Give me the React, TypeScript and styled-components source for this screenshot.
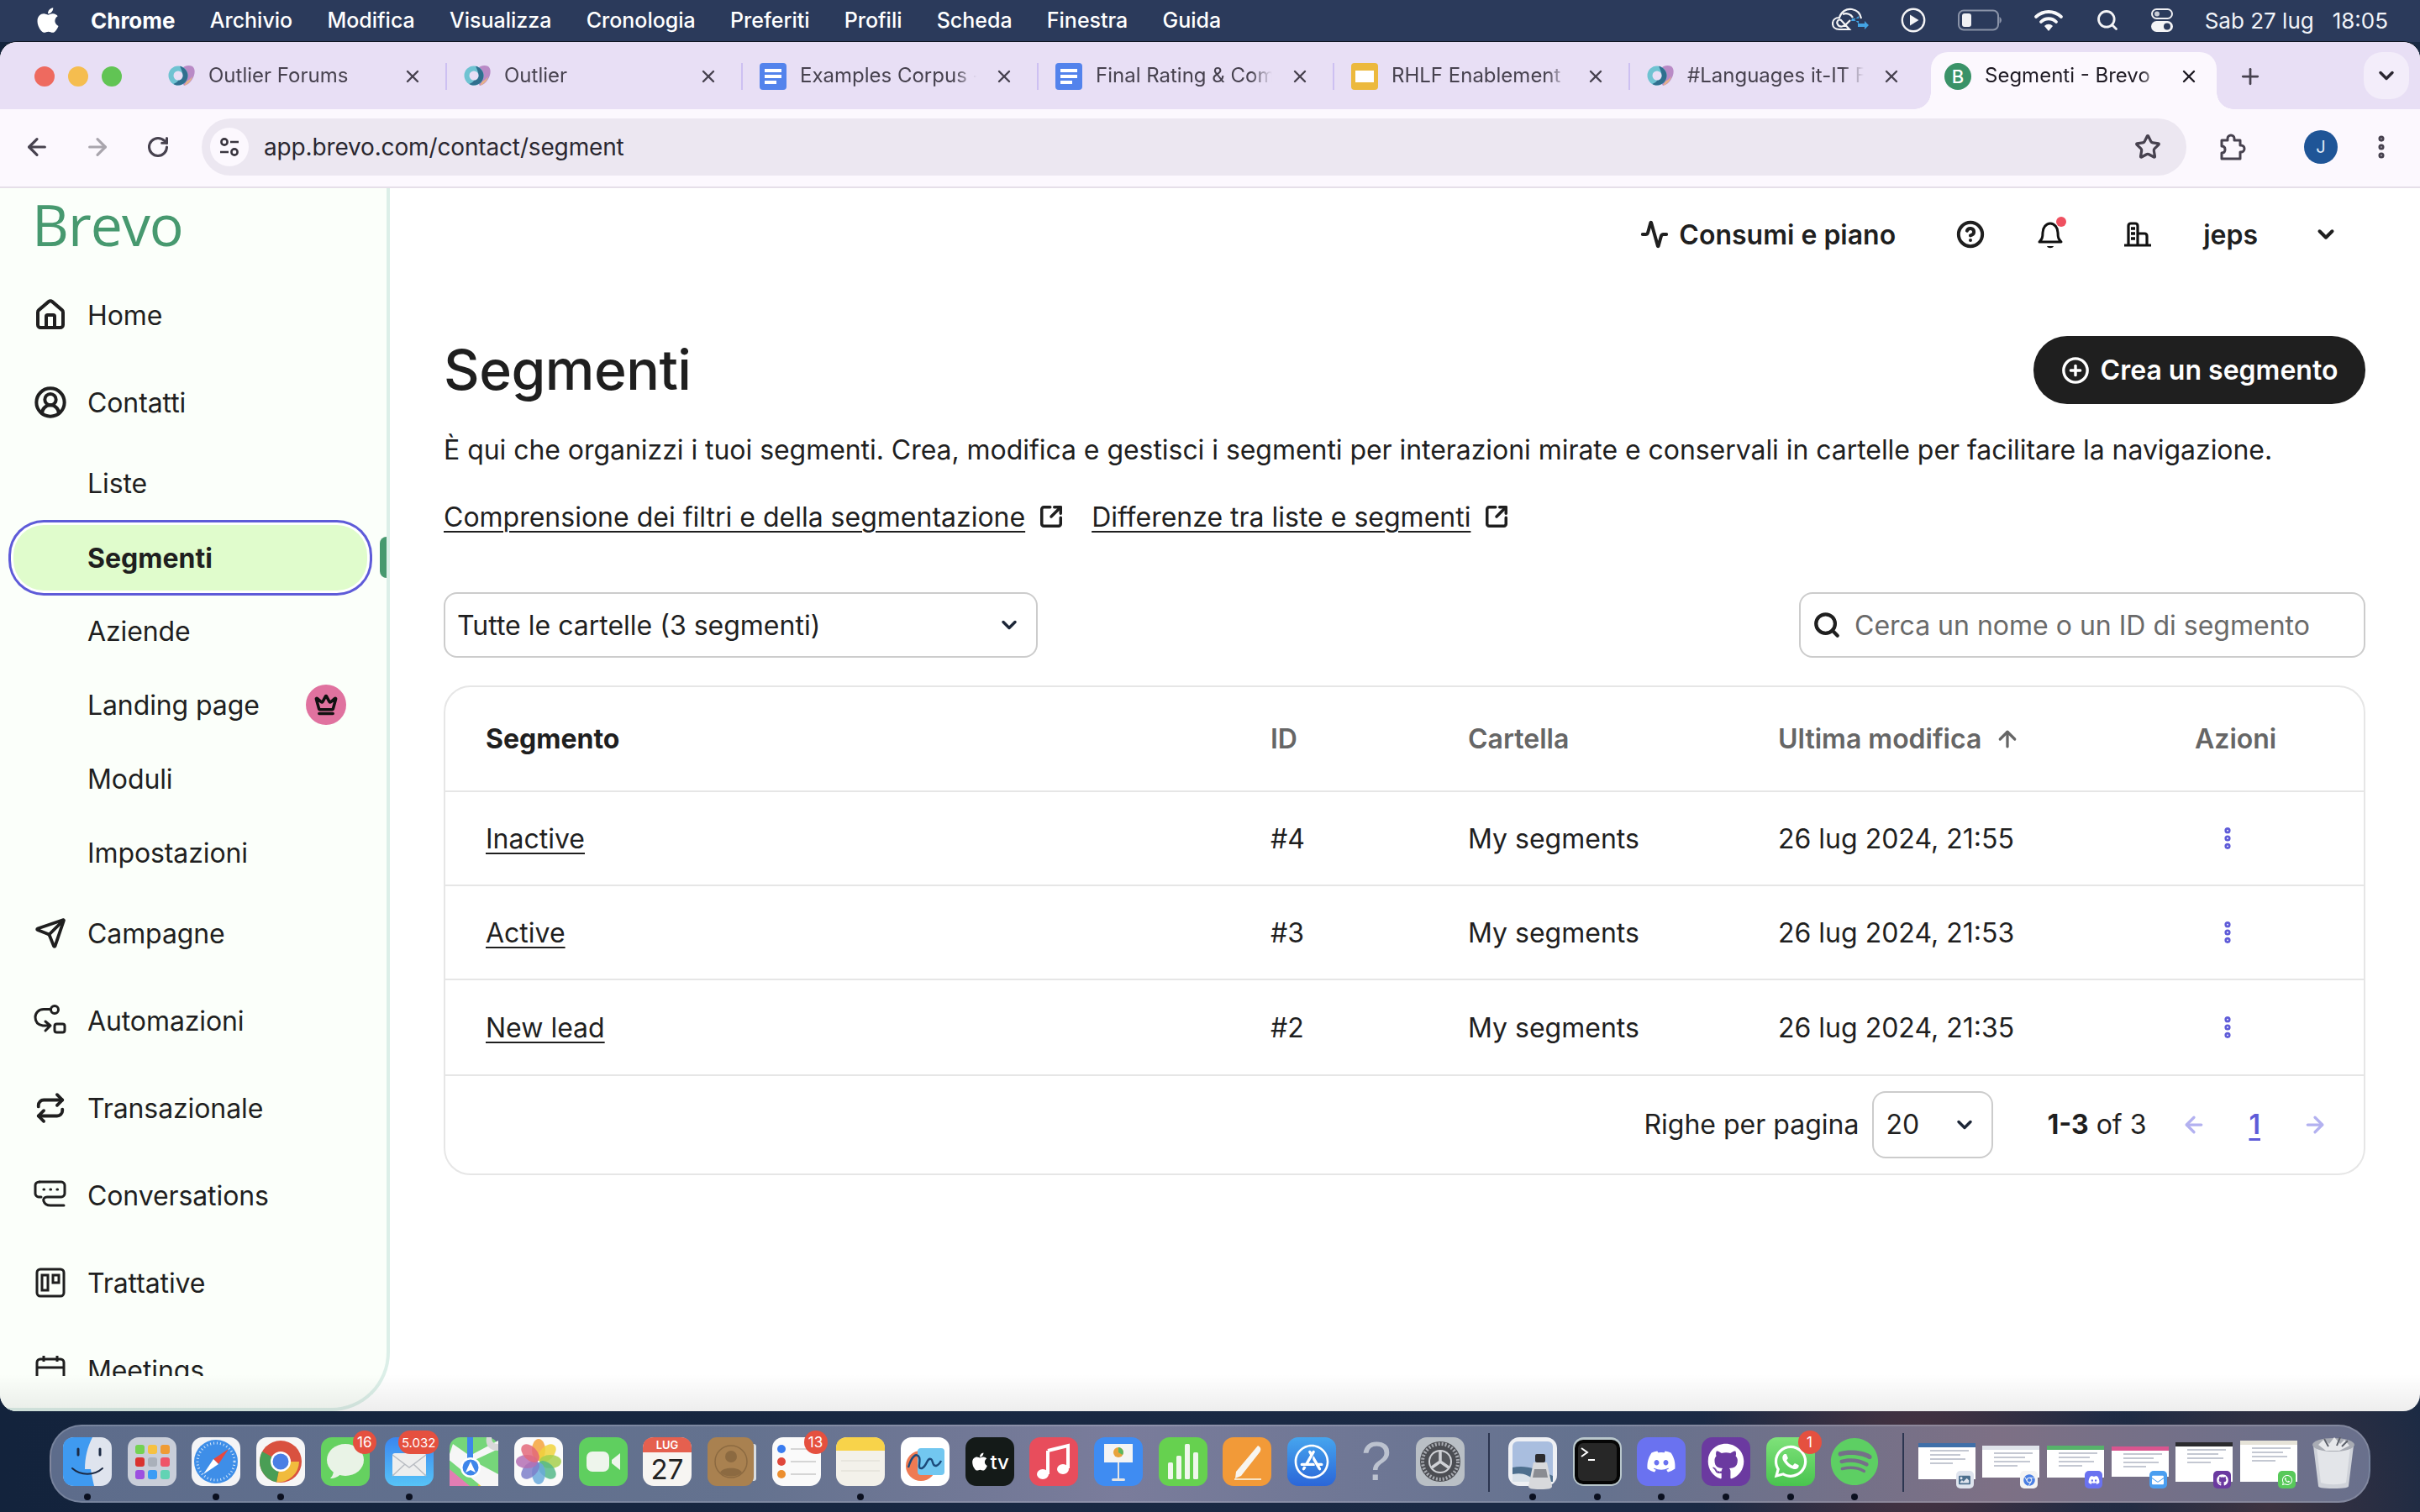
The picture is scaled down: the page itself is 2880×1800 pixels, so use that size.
import styled, { createGlobalStyle } from "styled-components";
import type { ReactNode } from "react";
import {
  Activity, ArrowLeft, ArrowRight, ArrowUp, ChevronDown, CirclePlus,
  CircleHelp, CircleUserRound, EllipsisVertical, House, Plus, Repeat, RotateCw, Search, Send,
  SquareArrowOutUpRight, Star, X, Crown,
} from "lucide-react";
import {
  FaApple, FaAppStore, FaChrome, FaDiscord, FaEnvelope, FaGithub, FaImage, FaSpotify, FaWhatsapp,
} from "react-icons/fa";

const GlobalStyle = createGlobalStyle`
  html, body { margin: 0; padding: 0; }
  body { font-family: "Inter", "Liberation Sans", sans-serif; color: #1f1f1f; }
  * { box-sizing: border-box; }
`;

const Screen = styled.div`
  width: 2880px;
  height: 1800px;
  display: flex;
  flex-direction: column;
  overflow: hidden;
  background:
    radial-gradient(circle at 2280px 1740px, #4a3340 0, rgba(74, 51, 64, 0) 260px),
    radial-gradient(circle at 2700px 1790px, #3e3340 0, rgba(62, 51, 64, 0) 220px),
    linear-gradient(90deg, #13233c 0%, #1b2a45 60%, #1a2a44 100%);
`;

/* mac menu bar */
const MenuBar = styled.div`
  height: 50px;
  flex: none;
  display: flex;
  align-items: center;
  padding: 0 38px 2px 40px;
  background: #2b3a5b;
  color: #fff;
  font-size: 25px;
  font-weight: 500;
`;

const AppleBox = styled.span`
  display: flex;
  width: 68px;
  font-size: 34px;
`;

const MenuItem = styled.span<{ $bold?: boolean }>`
  margin-right: 41.2px;
  font-size: ${(p) => (p.$bold ? 26 : 25)}px;
  font-weight: ${(p) => (p.$bold ? 700 : 500)};
`;

const StatusArea = styled.div`
  margin-left: auto;
  display: flex;
  align-items: center;
  gap: 38px;
`;

const StatusClock = styled.span`
  font-size: 26px;
  font-weight: 400;
  white-space: pre;
  color: #f1f3f8;
`;

/* browser window */
const BrowserWindow = styled.div`
  height: 1630px;
  flex: none;
  display: flex;
  flex-direction: column;
  border-radius: 20px;
  overflow: hidden;
  background: #fff;
  position: relative;
  box-shadow: 0 -1px 0 #0e1420;

  &::after {
    content: "";
    position: absolute;
    left: 0;
    right: 0;
    bottom: 0;
    height: 44px;
    background: linear-gradient(180deg, rgba(0, 0, 0, 0), rgba(0, 0, 0, 0.07));
    pointer-events: none;
  }
`;

const TabStrip = styled.div`
  height: 80px;
  flex: none;
  display: flex;
  align-items: flex-end;
  background: #e8dff5;
`;

const TrafficLights = styled.div`
  width: 178px;
  height: 68px;
  flex: none;
  display: flex;
  gap: 16px;
  padding: 17px 0 0 41px;
`;

const Light = styled.span<{ $color: string }>`
  width: 24px;
  height: 24px;
  border-radius: 50%;
  background: ${(p) => p.$color};
`;

const Tab = styled.div<{ $active?: boolean; $divider?: boolean }>`
  width: 352px;
  height: 68px;
  flex: none;
  display: flex;
  align-items: center;
  padding: 0 0 10px ${(p) => (p.$active ? 24 : 22)}px;
  font-size: 24px;
  color: ${(p) => (p.$active ? "#1f1b24" : "#47424f")};
  position: relative;

  &::before {
    content: "";
    display: ${(p) => (p.$divider ? "block" : "none")};
    position: absolute;
    left: 0;
    top: 13px;
    width: 2px;
    height: 32px;
    background: #cdc0f2;
  }
`;

const ActiveShape = styled.div`
  position: absolute;
  inset: 0 4px 0 8px;
  background: #fcf8fe;
  border-radius: 20px 20px 0 0;

  &::before,
  &::after {
    content: "";
    position: absolute;
    bottom: 0;
    width: 20px;
    height: 20px;
  }
  &::before {
    left: -20px;
    background: radial-gradient(circle at 0 0, transparent 19.5px, #fcf8fe 20px);
  }
  &::after {
    right: -20px;
    background: radial-gradient(circle at 100% 0, transparent 19.5px, #fcf8fe 20px);
  }
`;

const Favicon = styled.span`
  width: 32px;
  height: 32px;
  flex: none;
  display: flex;
  position: relative;
`;

const BrevoFavicon = styled(Favicon)`
  border-radius: 50%;
  background: #3a9268;
  color: #fff;
  font-size: 22px;
  font-weight: 500;
  align-items: center;
  justify-content: center;
`;

const TabTitle = styled.span`
  width: 210px;
  margin: -3px 0 0 16px;
  padding-bottom: 1px;
  white-space: nowrap;
  overflow: hidden;
  position: relative;
  -webkit-mask-image: linear-gradient(90deg, #000 88%, transparent 100%);
  mask-image: linear-gradient(90deg, #000 88%, transparent 100%);
`;

const TabClose = styled.span`
  margin-left: 21px;
  display: flex;
  position: relative;
`;

const NewTab = styled.div`
  width: 72px;
  height: 68px;
  flex: none;
  display: flex;
  align-items: center;
  justify-content: center;
  padding-bottom: 10px;
  color: #47424f;
`;

const TabSearch = styled.div`
  width: 54px;
  height: 56px;
  margin: 0 13px 12px auto;
  border-radius: 22px;
  background: #f3edfa;
  display: flex;
  align-items: center;
  justify-content: center;
  color: #2b2731;
`;

const Toolbar = styled.div`
  height: 94px;
  flex: none;
  display: flex;
  align-items: center;
  padding: 0 8px 2px;
  background: #fcf8fe;
  border-bottom: 2px solid #e6dfe9;
  color: #47424f;
`;

const ToolButton = styled.span<{ $muted?: boolean; $w?: number }>`
  width: ${(p) => p.$w ?? 72}px;
  flex: none;
  display: flex;
  justify-content: center;
  color: ${(p) => (p.$muted ? "#a9a5ad" : "#47424f")};
`;

const UrlBar = styled.div`
  width: 2362px;
  height: 68px;
  margin: 0 18px 0 16px;
  flex: none;
  display: flex;
  align-items: center;
  padding: 0 30px 0 10px;
  border-radius: 34px;
  background: #ece7f1;
`;

const SiteInfo = styled.span`
  width: 46px;
  height: 46px;
  border-radius: 50%;
  background: #fcf8fe;
  display: flex;
  align-items: center;
  justify-content: center;
`;

const UrlText = styled.span`
  margin-left: 18px;
  font-size: 28px;
  letter-spacing: -0.15px;
  color: #2a2730;
`;

const StarBox = styled.span`
  margin-left: auto;
  display: flex;
`;

const ToolDivider = styled.span`
  width: 2px;
  height: 34px;
  background: #e3dbef;
  margin: 0 32px 0 18px;
`;

const Avatar = styled.span`
  width: 40px;
  height: 40px;
  flex: none;
  border-radius: 50%;
  background: #1f5597;
  color: #dfe9f6;
  font-size: 20px;
  display: flex;
  align-items: center;
  justify-content: center;
`;

/* page */
const Body = styled.div`
  flex: 1;
  min-height: 0;
  display: flex;
`;

const Sidebar = styled.aside`
  width: 464px;
  flex: none;
  display: flex;
  flex-direction: column;
  background: #fbfffa;
  border-right: 4px solid #dcefe8;
  border-bottom: 4px solid #dcefe8;
  border-bottom-right-radius: 70px;
`;

const LogoRow = styled.div`
  height: 99px;
  flex: none;
  padding: 20px 0 0 38px;
  font-size: 68px;
  line-height: 46px;
  letter-spacing: -1px;
  font-family: "Open Sans", "Inter", sans-serif;
  font-weight: 500;
  color: #47996f;
`;

const NavList = styled.nav`
  flex: 1;
  min-height: 0;
  margin-bottom: 38px;
  overflow: hidden;
`;

const NavItem = styled.div<{ $sub?: boolean }>`
  height: ${(p) => (p.$sub ? 88 : 104)}px;
  display: flex;
  align-items: center;
  padding-left: ${(p) => (p.$sub ? 104 : 40)}px;
  padding-right: 48px;
  gap: 24px;
  font-size: 32px;
  letter-spacing: -0.1px;
  color: #1f1f1f;
  position: relative;
`;

const NavIcon = styled.span`
  width: 40px;
  height: 40px;
  flex: none;
  display: flex;
  align-items: center;
  justify-content: center;
`;

const ActiveWrap = styled.div`
  height: 88px;
  padding: 6px 0 0 16px;
  position: relative;
`;

const ActivePill = styled.div`
  width: 421px;
  height: 78px;
  display: flex;
  align-items: center;
  padding-left: 88px;
  border-radius: 36px;
  background: #e0fccc;
  box-shadow: 0 0 0 3px #fff, 0 0 0 6px #5e5bd8;
  font-size: 32px;
  font-weight: 700;
`;

const ActiveMark = styled.span`
  position: absolute;
  left: 452px;
  top: 20px;
  width: 8px;
  height: 49px;
  border-radius: 8px 0 0 8px;
  background: #47996f;
`;

const CrownBadge = styled.span`
  margin-left: auto;
  width: 48px;
  height: 48px;
  border-radius: 50%;
  background: #e0729f;
  display: flex;
  align-items: center;
  justify-content: center;
`;

const Main = styled.main`
  flex: 1;
  min-width: 0;
  padding: 0 65px 0 64px;
`;

const TopBar = styled.div`
  height: 110px;
  display: flex;
  align-items: center;
  font-size: 32px;
  font-weight: 600;
  padding-right: 32px;
  justify-content: flex-end;
`;

const TopItem = styled.span<{ $gap?: number }>`
  display: flex;
  align-items: center;
  gap: 12px;
  margin-left: ${(p) => p.$gap ?? 0}px;
`;

const BellWrap = styled.span`
  display: flex;
  position: relative;
`;

const BellDot = styled.span`
  position: absolute;
  top: -3px;
  right: -3px;
  width: 12px;
  height: 12px;
  border-radius: 50%;
  background: #ef5060;
`;

const TitleRow = styled.div`
  margin-top: 66px;
  height: 81px;
  display: flex;
  align-items: center;
  justify-content: space-between;
`;

const Title = styled.h1`
  margin: -2px 0 0;
  font-size: 66px;
  font-weight: 500;
  letter-spacing: -0.5px;
`;

const CreateButton = styled.button`
  height: 81px;
  width: 395px;
  border: none;
  border-radius: 40px;
  background: #1f1f1f;
  color: #fff;
  font: 600 32px "Inter", sans-serif;
  display: flex;
  align-items: center;
  justify-content: center;
  gap: 13px;
`;

const Description = styled.p`
  margin: 33px 0 0;
  font-size: 32px;
  line-height: 44px;
  letter-spacing: -0.05px;
  white-space: nowrap;
`;

const LinkRow = styled.div`
  margin-top: 35px;
  height: 44px;
  display: flex;
  align-items: center;
  font-size: 32px;
`;

const TextLink = styled.a`
  color: #1f1f1f;
  text-decoration: underline;
  text-underline-offset: 5px;
  text-decoration-thickness: 2px;
`;

const LinkIcon = styled.span`
  display: flex;
  margin: 0 33px 0 16px;
`;

const FilterRow = styled.div`
  margin-top: 68px;
  display: flex;
  justify-content: space-between;
`;

const SelectBox = styled.div<{ $w: number; $h: number }>`
  width: ${(p) => p.$w}px;
  height: ${(p) => p.$h}px;
  display: flex;
  align-items: center;
  justify-content: space-between;
  padding: 0 18px 0 14px;
  border: 2px solid #cccccc;
  border-radius: 16px;
  font-size: 32px;
`;

const SearchBox = styled.div`
  width: 674px;
  height: 78px;
  display: flex;
  align-items: center;
  gap: 16px;
  padding: 0 14px;
  border: 2px solid #cccccc;
  border-radius: 16px;
  font-size: 32px;
  color: #6a6a6a;
`;

const Table = styled.div`
  margin-top: 33px;
  height: 583px;
  border: 2px solid #e6e6e6;
  border-radius: 32px;
`;

const Row = styled.div<{ $head?: boolean; $last?: boolean }>`
  height: ${(p) => (p.$head ? 125 : p.$last ? 114 : 112)}px;
  display: grid;
  grid-template-columns: 934px 235px 369px 496px 1fr;
  align-items: center;
  padding-left: 48px;
  border-bottom: 2px solid #e6e6e6;
  font-size: 32px;
  font-weight: ${(p) => (p.$head ? 600 : 400)};
  color: ${(p) => (p.$head ? "#666666" : "#1f1f1f")};
`;

const HeadStrong = styled.span`
  color: #1f1f1f;
  font-weight: 700;
`;

const SortHead = styled.span`
  display: flex;
  align-items: center;
  gap: 16px;
`;

const DotsCell = styled.span`
  display: flex;
  margin-left: 23px;
  color: #5e5bd8;
`;

const Footer = styled.div`
  height: 115px;
  display: flex;
  align-items: center;
  justify-content: flex-end;
  font-size: 32px;
  padding-right: 43px;
`;

const PageBold = styled.b`
  font-weight: 700;
`;

const RangeText = styled.span`
  margin: 0 42px 0 64px;
`;

const PagerNumber = styled.span`
  margin: 0 50px;
  color: #5e5bd8;
  font-weight: 600;
  text-decoration: underline;
  text-underline-offset: 5px;
  text-decoration-thickness: 3px;
`;

const RowsSelect = styled(SelectBox)`
  margin-left: 16px;
`;

/* dock */
const DockZone = styled.div`
  flex: 1;
  padding: 16px 0 0 59px;
`;

const Dock = styled.div`
  width: 2762px;
  height: 93px;
  display: flex;
  gap: 18.7px;
  padding: 13px 0 0 14px;
  border: 2px solid rgba(255, 255, 255, 0.16);
  border-radius: 38px;
  background: linear-gradient(90deg, #5d6c8b 0%, #64728f 30%, #7a7c9b 46%, #64728f 66%, #7d7085 84%, #69708c 100%);
`;

const DockApp = styled.div`
  width: 58px;
  height: 58px;
  flex: none;
  position: relative;
`;

const RunDot = styled.span`
  position: absolute;
  left: 25px;
  top: 67px;
  width: 8px;
  height: 8px;
  border-radius: 50%;
  background: #0b1020;
`;

const Badge = styled.span<{ $wide?: boolean }>`
  position: absolute;
  top: -8px;
  right: ${(p) => (p.$wide ? -6 : -8)}px;
  min-width: 28px;
  height: 28px;
  padding: 0 4px;
  border-radius: 14px;
  background: #e5503f;
  color: #fff;
  font-size: ${(p) => (p.$wide ? 15 : 17)}px;
  display: flex;
  align-items: center;
  justify-content: center;
`;

const Tile = styled.div<{ $bg: string; $color?: string; $size?: number }>`
  width: 58px;
  height: 58px;
  border-radius: 13px;
  background: ${(p) => p.$bg};
  color: ${(p) => p.$color ?? "#fff"};
  font-size: ${(p) => p.$size ?? 36}px;
  display: flex;
  align-items: center;
  justify-content: center;
  overflow: hidden;
`;

const TvText = styled.span`
  font-size: 24px;
  font-weight: 500;
  display: flex;
  align-items: center;
`;

const QuestionMark = styled.span`
  width: 58px;
  height: 58px;
  display: flex;
  align-items: center;
  justify-content: center;
  font-family: "Liberation Sans", sans-serif;
  font-size: 64px;
  font-weight: 400;
  color: #bcc2cf;
`;

const DockDivider = styled.span`
  width: 2px;
  height: 70px;
  flex: none;
  margin: -5px 3px 0 9px;
  background: #2b3550;
`;

const ThumbApp = styled.div`
  width: 58px;
  height: 58px;
  flex: none;
  position: relative;
`;

const ThumbWindow = styled.div<{ $top: number; $h: number; $bar: string }>`
  width: 68px;
  height: ${(p) => p.$h}px;
  margin: ${(p) => p.$top}px 0 0 -5px;
  background: linear-gradient(${(p) => p.$bar} 0 5px, #fff 5px);
  overflow: hidden;
  display: flex;
  flex-direction: column;
  gap: 3px;
  padding: 8px 8px 0 14px;
`;

const ThumbLine = styled.span<{ $w: number }>`
  height: 2px;
  flex: none;
  width: ${(p) => p.$w}%;
  background: #c4c8d2;
`;

const ThumbBadge = styled.span<{ $bg: string }>`
  position: absolute;
  right: -3px;
  top: 40px;
  width: 21px;
  height: 21px;
  border-radius: 5px;
  background: ${(p) => p.$bg};
  color: #fff;
  font-size: 14px;
  display: flex;
  align-items: center;
  justify-content: center;
`;

/* drawings */
const OutlierIcon = () => (
  <svg width="32" height="32" viewBox="0 0 32 32">
    <path d="M16 7c3-4 9-5 13-3 4 3 3 10 0 15-2 4-6 7-10 8-4-6-5-14-3-20z" fill="#b98ac6" />
    <path d="M22 22c2-1 5-3 7-6-1 5-5 9-10 11z" fill="#e8b487" />
    <circle cx="12" cy="15" r="11.500" fill="#6fc3d2" />
    <path d="M14 3.700c5 1 9.500 5.800 9.500 11.300 0 6.400-5.100 11.500-11.500 11.500-2 0-4-.5-5.600-1.500C9 24 12 22 12 20.500c3.500 0 5.500-2.500 5.500-5.500 0-4-2-8-3.500-11.300z" fill="#2f6f8e" />
    <circle cx="12" cy="15" r="5.500" fill="#e8dff5" />
  </svg>
);

const DocIcon = ({ color }: { color: string }) => (
  <svg width="32" height="32" viewBox="0 0 32 32">
    <rect width="32" height="32" rx="4" fill={color} />
    <rect x="6" y="7" width="20" height="4" fill="#fff" />
    <rect x="6" y="14" width="20" height="4" fill="#fff" />
    <rect x="6" y="21" width="14" height="4" fill="#fff" />
  </svg>
);

const SlidesIcon = () => (
  <svg width="32" height="32" viewBox="0 0 32 32">
    <rect width="32" height="32" rx="4" fill="#ecb93d" />
    <rect x="5" y="9" width="22" height="14" fill="#fff" />
  </svg>
);

const TuneIcon = () => (
  <svg width="28" height="28" viewBox="0 0 28 28" fill="none" stroke="#3a3640" strokeWidth="2.6">
    <circle cx="8" cy="8" r="3.6" />
    <path d="M15 8h10M3 20h10" />
    <circle cx="20" cy="20" r="3.6" />
  </svg>
);

const ExtensionIcon = () => (
  <svg width="36" height="36" viewBox="0 0 36 36" fill="none" stroke="#47424f" strokeWidth="3" strokeLinejoin="round">
    <path d="M6 10h7V8a4 4 0 0 1 8 0v2h7v6h1a4 4 0 0 1 0 8h-1v8H6v-7c3 0 4-2 4-4s-1-4-4-4z" />
  </svg>
);

const CloudSyncIcon = () => (
  <svg width="44" height="32" viewBox="0 0 44 32" fill="none" stroke="#f4f4f6" strokeWidth="2.200">
    <path d="M9 27C4 27 1 24 1 20c0-4 3-7 8-7 2-7 8-11 15-10 6 1 10 5 11 11" />
    <path d="M13 9c5-2 10 0 12 4M9 27h12L11 16c-3-2-6 2-4 5 2 4 8 3 11-1l4-4" />
    <path d="M32 11v3h-8l-1 3 9 0v3l-5-4.500zM31 20h8v-3l5 5-5 5v-3h-8z" fill="#44a4e4" stroke="none" />
  </svg>
);

const PlayIcon = () => (
  <svg width="30" height="30" viewBox="0 0 30 30">
    <circle cx="15" cy="15" r="13.200" fill="none" stroke="#f4f4f6" strokeWidth="2.400" />
    <path d="M11 8.500 21.500 15 11 21.500z" fill="#f4f4f6" />
  </svg>
);

const BatteryIcon = () => (
  <svg width="52" height="26" viewBox="0 0 52 26">
    <rect x="1" y="1.500" width="47" height="23" rx="6" fill="none" stroke="#8a93a8" strokeWidth="2" />
    <rect x="5" y="5" width="11" height="16" rx="3" fill="#f1f1f4" />
    <path d="M49.500 9c1.500 1 2.500 2.500 2.500 4s-1 3-2.500 4z" fill="#8a93a8" />
  </svg>
);

const WifiIcon = () => (
  <svg width="36" height="28" viewBox="0 0 36 28" fill="none" stroke="#f8f8fa" strokeWidth="3.800" strokeLinecap="round">
    <path d="M3 10c9-8 21-8 30 0" />
    <path d="M9 16c5-5 13-5 18 0" />
    <path d="M13 21c3-3 7-3 10 0l-5 6z" fill="#f8f8fa" stroke="none" />
  </svg>
);

const ControlIcon = () => (
  <svg width="26" height="28" viewBox="0 0 26 28">
    <rect x="1" y="1" width="24" height="11" rx="5.500" fill="none" stroke="#eeeef2" strokeWidth="2" />
    <circle cx="7" cy="6.500" r="3" fill="#c9ccd6" />
    <rect y="15" width="26" height="13" rx="6.500" fill="#f4f4f6" />
    <circle cx="19" cy="21.500" r="4" fill="#2b3a5b" />
  </svg>
);

const BellIcon = () => (
  <svg width="32" height="36" viewBox="0 0 32 36" fill="none" stroke="#111" strokeWidth="3" strokeLinejoin="round">
    <path d="M3 27c3-3 4-5 4-11 0-6 4-11 9-11s9 5 9 11c0 6 1 8 4 11z" />
    <path d="M12 32h8c-1 3-7 3-8 0z" fill="#111" stroke="none" />
  </svg>
);

const BuildingIcon = () => (
  <svg width="32" height="30" viewBox="0 0 32 30" fill="none" stroke="#111" strokeWidth="3.200">
    <path d="M5 28V5c0-2 1-3 3-3h5c2 0 3 1 3 3v23M16 14h8c2 0 3 1 3 3v11M0 28h32" />
    <path d="M8 8h5M8 14h5M8 20h5" strokeWidth="3.400" />
  </svg>
);

const AutomationIcon = () => (
  <svg width="40" height="40" viewBox="0 0 40 40" fill="none" stroke="#1f1f1f" strokeWidth="3" strokeLinecap="round" strokeLinejoin="round">
    <circle cx="25" cy="7" r="4.500" />
    <rect x="25" y="24" width="12" height="10" rx="2.500" />
    <path d="M19 6.500h-7C6 6.500 2 11 2 16s3 9 9 10h9M14 21l6 5-6 6" />
  </svg>
);

const ChatIcon = () => (
  <svg width="40" height="40" viewBox="0 0 40 40" fill="none" stroke="#1f1f1f" strokeWidth="3" strokeLinecap="round" strokeLinejoin="round">
    <path d="M7 4h26c2 0 4 2 4 4v10c0 2-2 4-4 4H16c-3 0-5 2-4 5s3 5 8 5h16" />
    <path d="M7 4C4 4 2 6 2 8v10c0 2 2 4 4 4h3" />
    <path d="M12 13h.5M20 13h.5M28 13h.5" strokeWidth="3.200" />
  </svg>
);

const BoardIcon = () => (
  <svg width="40" height="40" viewBox="0 0 40 40" fill="none" stroke="#1f1f1f" strokeWidth="3">
    <rect x="4" y="4" width="32" height="32" rx="4" />
    <rect x="10" y="11" width="7" height="18" />
    <rect x="23" y="11" width="7" height="9" />
  </svg>
);

const CalIcon = () => (
  <svg width="40" height="40" viewBox="0 0 40 40" fill="none" stroke="#1f1f1f" strokeWidth="3">
    <rect x="4" y="7" width="32" height="30" rx="4" />
    <path d="M4 17h32M12 3v7M28 3v7" />
  </svg>
);

const FinderIcon = () => (
  <svg width="58" height="58" viewBox="0 0 58 58">
    <rect width="58" height="58" rx="13" fill="#dfe4ee" />
    <path d="M13 0C5 0 0 5 0 13v32c0 8 5 13 13 13h24c-2-8-3-14-4-20h-7c0-14 3-26 9-38z" fill="#3f9af0" />
    <path d="M18 14v7M44 14v7" stroke="#1c2a44" strokeWidth="3" strokeLinecap="round" />
    <path d="M11 37c10 9 26 9 36 0" stroke="#1c2a44" strokeWidth="2" fill="none" strokeLinecap="round" />
  </svg>
);

const launchColors = ["#74d253", "#f6c141", "#ef9b34", "#d9332f", "#aab0ba", "#ef5468", "#9c4fe0", "#3b9cf5", "#62d3b4"];

const LaunchpadIcon = () => (
  <svg width="58" height="58" viewBox="0 0 58 58">
    <rect width="58" height="58" rx="13" fill="#c9ced9" />
    {launchColors.map((c, i) => (
      <rect key={c} x={9 + (i % 3) * 15} y={9 + Math.floor(i / 3) * 15} width="11" height="11" rx="3" fill={c} />
    ))}
  </svg>
);

const SafariIcon = () => (
  <svg width="58" height="58" viewBox="0 0 58 58">
    <rect width="58" height="58" rx="13" fill="#f4f4f6" />
    <circle cx="29" cy="29" r="26" fill="#3e8ee8" />
    <circle cx="29" cy="29" r="22" fill="none" stroke="#d8e8fa" strokeWidth="3" strokeDasharray="1 3" />
    <path d="M44 14 26 26l6 6z" fill="#e8483f" />
    <path d="M14 44 26 26l6 6z" fill="#fff" />
  </svg>
);

const ChromeIcon = () => (
  <svg width="58" height="58" viewBox="0 0 58 58">
    <rect width="58" height="58" rx="13" fill="#f6f6f6" />
    <circle cx="29" cy="29" r="25" fill="#d9513f" />
    <path d="M29 29 51 29A25 25 0 0 1 24 53.500z" fill="#f1bb3d" />
    <path d="M29 29 24 53.500A25 25 0 0 1 7 17z" fill="#4a9e55" />
    <circle cx="29" cy="29" r="12" fill="#fff" />
    <circle cx="29" cy="29" r="9.500" fill="#4a7fe4" />
  </svg>
);

const MessagesIcon = () => (
  <svg width="58" height="58" viewBox="0 0 58 58">
    <rect width="58" height="58" rx="13" fill="#65d160" />
    <ellipse cx="29" cy="27" rx="22" ry="19" fill="#e9f3e6" />
    <path d="M15 39c0 5-2 8-4 10 5 0 10-2 13-6z" fill="#e9f3e6" />
  </svg>
);

const MailIcon = () => (
  <svg width="58" height="58" viewBox="0 0 58 58">
    <defs>
      <linearGradient id="mailBg" x1="0" y1="0" x2="0" y2="1">
        <stop offset="0" stopColor="#3a86f0" />
        <stop offset="1" stopColor="#57c3f7" />
      </linearGradient>
    </defs>
    <rect width="58" height="58" rx="13" fill="url(#mailBg)" />
    <rect x="9" y="19" width="40" height="27" rx="3" fill="#eeeeee" />
    <path d="M9 21l20 15 20-15M9 46l15-14M49 46 34 32" fill="none" stroke="#b9bcc2" strokeWidth="1.500" />
  </svg>
);

const MapsIcon = () => (
  <svg width="58" height="58" viewBox="0 0 58 58">
    <rect width="58" height="58" rx="13" fill="#76d67a" />
    <path d="M0 38 24 58H0z" fill="#e27db3" />
    <path d="M34 58h16L38 40z" fill="#f1c935" />
    <path d="M-2 26 40 60h18V44L28 28 58 14V4L24 22 4 8z" fill="#f6f6f6" />
    <rect x="21" y="0" width="7" height="28" fill="#3e86ea" />
    <path d="M44 0c-2 10 4 16 14 16V8C52 8 50 5 50 0z" fill="#d8d8d8" />
    <circle cx="25" cy="36" r="12" fill="#fff" />
    <circle cx="25" cy="36" r="9.500" fill="#3e86ea" />
    <path d="M25 29l6 13-6-3-6 3z" fill="#fff" />
  </svg>
);

const petalColors = ["#f4a33c", "#f0d23c", "#a6cf4e", "#55b98a", "#6aa9db", "#7c7fc9", "#b46fb4", "#e3687a"];

const PhotosIcon = () => (
  <svg width="58" height="58" viewBox="0 0 58 58">
    <rect width="58" height="58" rx="13" fill="#fafafa" />
    {petalColors.map((c, i) => (
      <ellipse key={c} cx="29" cy="15" rx="8" ry="13" fill={c} opacity="0.85" transform={`rotate(${i * 45} 29 29)`} />
    ))}
  </svg>
);

const FaceTimeIcon = () => (
  <svg width="58" height="58" viewBox="0 0 58 58">
    <rect width="58" height="58" rx="13" fill="#5fcf5f" />
    <rect x="9" y="17" width="27" height="24" rx="7" fill="#eef5ec" />
    <path d="M39 27l10-8v20l-10-8z" fill="#eef5ec" />
  </svg>
);

const CalendarAppIcon = () => (
  <svg width="58" height="58" viewBox="0 0 58 58">
    <rect width="58" height="58" rx="13" fill="#f7f5f2" />
    <path d="M0 18V13C0 5 5 0 13 0h32c8 0 13 5 13 13v5z" fill="#e5604f" />
    <text x="29" y="14" textAnchor="middle" fontSize="13" fontWeight="600" fill="#fff" fontFamily="Inter">LUG</text>
    <text x="29" y="50" textAnchor="middle" fontSize="33" fill="#222" fontFamily="Inter">27</text>
  </svg>
);

const ContactsIcon = () => (
  <svg width="58" height="58" viewBox="0 0 58 58">
    <rect x="50" y="8" width="8" height="44" rx="3" fill="#d8dde2" />
    <rect width="55" height="58" rx="11" fill="#a98150" />
    <circle cx="28" cy="29" r="19" fill="none" stroke="#8c6a41" strokeWidth="1.500" />
    <circle cx="28" cy="23" r="7" fill="#8c6a41" />
    <path d="M15 42c3-7 23-7 26 0-6 6-20 6-26 0z" fill="#8c6a41" />
  </svg>
);

const RemindersIcon = () => (
  <svg width="58" height="58" viewBox="0 0 58 58">
    <rect width="58" height="58" rx="13" fill="#fafafa" />
    <circle cx="11" cy="14" r="5" fill="#3a7cf0" />
    <circle cx="11" cy="29" r="5" fill="#e0473b" />
    <circle cx="11" cy="44" r="5" fill="#ec8e2e" />
    <path d="M22 14h30M22 29h30M22 44h30" stroke="#c9c9c9" strokeWidth="1.500" />
  </svg>
);

const NotesIcon = () => (
  <svg width="58" height="58" viewBox="0 0 58 58">
    <rect width="58" height="58" rx="13" fill="#f3f1ea" />
    <path d="M0 16V13C0 5 5 0 13 0h32c8 0 13 5 13 13v3z" fill="#f8d34a" />
    <path d="M6 28h46M6 40h46" stroke="#dddbd2" strokeWidth="1" />
  </svg>
);

const FreeformIcon = () => (
  <svg width="58" height="58" viewBox="0 0 58 58">
    <rect width="58" height="58" rx="13" fill="#fff" />
    <circle cx="24" cy="34" r="18" fill="#ef7a52" />
    <rect x="20" y="13" width="32" height="32" rx="4" fill="#72c7f0" />
    <path d="M9 36c4-14 10-18 13-12 2 5-3 14 3 13 6-2 6-13 11-11 3 2 1 9 6 8 3-1 5-4 6-6" fill="none" stroke="#1c4a7a" strokeWidth="2.400" />
  </svg>
);

const MusicIcon = () => (
  <svg width="58" height="58" viewBox="0 0 58 58">
    <rect width="58" height="58" rx="13" fill="#e84d5c" />
    <path d="M22 16 46 10v27" fill="none" stroke="#fff" strokeWidth="4" />
    <path d="M22 16v28" stroke="#fff" strokeWidth="4" />
    <ellipse cx="16" cy="44" rx="7" ry="6" fill="#fff" />
    <ellipse cx="40" cy="38" rx="7" ry="6" fill="#fff" />
  </svg>
);

const KeynoteIcon = () => (
  <svg width="58" height="58" viewBox="0 0 58 58">
    <rect width="58" height="58" rx="13" fill="#3f8cf2" />
    <rect x="12" y="8" width="34" height="22" fill="#f4f4f4" />
    <circle cx="29" cy="18" r="6" fill="#e8a33c" />
    <path d="M29 18V12a6 6 0 0 1 5 9z" fill="#5ab85f" />
    <path d="M29 30v20" stroke="#e4e4e4" strokeWidth="2" />
    <rect x="21" y="49" width="16" height="3" rx="1.500" fill="#e4e4e4" />
  </svg>
);

const NumbersIcon = () => (
  <svg width="58" height="58" viewBox="0 0 58 58">
    <rect width="58" height="58" rx="13" fill="#66d14f" />
    <rect x="11" y="30" width="6" height="20" rx="1.500" fill="#f0f7ec" />
    <rect x="21" y="22" width="6" height="28" rx="1.500" fill="#f0f7ec" />
    <rect x="31" y="8" width="6" height="42" rx="1.500" fill="#f0f7ec" />
    <rect x="41" y="18" width="6" height="32" rx="1.500" fill="#f0f7ec" />
  </svg>
);

const PagesIcon = () => (
  <svg width="58" height="58" viewBox="0 0 58 58">
    <rect width="58" height="58" rx="13" fill="#f29a38" />
    <path d="M42 10c4 2 4 5 2 8L22 46l-7 3 1-8z" fill="#f8f5ef" />
    <path d="M14 50h32" stroke="#f8e4c4" strokeWidth="2" />
  </svg>
);

const SettingsIcon = () => (
  <svg width="58" height="58" viewBox="0 0 58 58">
    <rect width="58" height="58" rx="13" fill="#b9bfc5" />
    <circle cx="29" cy="29" r="24" fill="#4b4d52" />
    <circle cx="29" cy="29" r="21" fill="none" stroke="#a9acb2" strokeWidth="4" strokeDasharray="2 2" />
    <circle cx="29" cy="29" r="14" fill="#d0d2d6" />
    <circle cx="29" cy="29" r="12" fill="#55575c" />
    <path d="M29 17v12l-10 7M29 29l10 7" stroke="#d0d2d6" strokeWidth="3.500" fill="none" />
  </svg>
);

const PreviewIcon = () => (
  <svg width="58" height="62" viewBox="0 0 58 62">
    <rect width="58" height="58" rx="13" fill="#eef0f4" />
    <rect x="5" y="5" width="48" height="48" rx="6" fill="#a9bedf" />
    <path d="M5 36c14-3 26 0 48 10v7H5z" fill="#4d6f8e" />
    <path d="M5 44c12-2 18 0 28 9H5z" fill="#d9e2ea" />
    <path d="M30 30h16l6 28c0 3-3 4-14 4s-14-1-14-4z" fill="#d8d9dc" />
    <rect x="32" y="20" width="12" height="10" rx="2" fill="#2b2b2e" />
    <path d="M31 38h14l2 10H29z" fill="#8a8c92" />
  </svg>
);

const TerminalIcon = () => (
  <svg width="58" height="58" viewBox="0 0 58 58">
    <rect width="58" height="58" rx="13" fill="#b9c7cc" />
    <rect x="2" y="3" width="54" height="53" rx="10" fill="#050505" />
    <rect x="6" y="7" width="46" height="45" rx="6" fill="#272727" />
    <path d="M10 13l7 5-7 5" fill="none" stroke="#fff" strokeWidth="2" />
    <path d="M18 27h8" stroke="#fff" strokeWidth="2" />
  </svg>
);

const TrashIcon = () => (
  <svg width="58" height="62" viewBox="0 0 58 62">
    <path d="M5 10h48l-6 48c0 2-4 3-18 3s-18-1-18-3z" fill="#cfd2d9" />
    <path d="M9 12h40l-5 42c-8 3-22 3-30 0z" fill="#e3e5e9" />
    <ellipse cx="29" cy="9" rx="25" ry="8" fill="#a9acb4" />
    <path d="M11 9l7-7 6 6 6-8 7 8 5-5 6 7-12 6H20z" fill="#e7e8eb" />
    <path d="M18 2l5 9M37 0l-4 10M46 4l-7 7" stroke="#5d616b" strokeWidth="2" />
  </svg>
);

type AppProps = { running?: boolean; badge?: string; wide?: boolean; children: ReactNode };

const DockEntry = ({ running, badge, wide, children }: AppProps) => (
  <DockApp>
    {children}
    {running && <RunDot />}
    {badge && <Badge $wide={wide}>{badge}</Badge>}
  </DockApp>
);

const tabs = [
  { title: "Outlier Forums", icon: <OutlierIcon /> },
  { title: "Outlier", icon: <OutlierIcon /> },
  { title: "Examples Corpus -", icon: <DocIcon color="#5383ec" /> },
  { title: "Final Rating & Com", icon: <DocIcon color="#5383ec" /> },
  { title: "RHLF Enablement", icon: <SlidesIcon /> },
  { title: "#Languages it-IT F", icon: <OutlierIcon /> },
];

const menus = ["Archivio", "Modifica", "Visualizza", "Cronologia", "Preferiti", "Profili", "Scheda", "Finestra", "Guida"];

const rows = [
  { name: "Inactive", id: "#4", date: "26 lug 2024, 21:55" },
  { name: "Active", id: "#3", date: "26 lug 2024, 21:53" },
  { name: "New lead", id: "#2", date: "26 lug 2024, 21:35" },
];

const thumbs = [
  { top: 7, h: 43, bar: "#3f6fa8", bg: "#dfe4ee", icon: <FaImage color="#4d6f8e" /> },
  { top: 10, h: 38, bar: "#dfe3ea", bg: "#f4f4f4", icon: <FaChrome color="#4a7fe4" /> },
  { top: 10, h: 38, bar: "#56b26a", bg: "#6a72f0", icon: <FaDiscord /> },
  { top: 11, h: 36, bar: "#d9558f", bg: "#4a9ef0", icon: <FaEnvelope /> },
  { top: 6, h: 47, bar: "#2b2b2e", bg: "#6b3aa0", icon: <FaGithub /> },
  { top: 4, h: 49, bar: "#e6e3d8", bg: "#58c95a", icon: <FaWhatsapp /> },
];

export default function App() {
  return (
    <Screen>
      <GlobalStyle />
      <MenuBar>
        <AppleBox><FaApple /></AppleBox>
        <MenuItem $bold>Chrome</MenuItem>
        {menus.map((m) => <MenuItem key={m}>{m}</MenuItem>)}
        <StatusArea>
          <CloudSyncIcon />
          <PlayIcon />
          <BatteryIcon />
          <WifiIcon />
          <Search size={28} strokeWidth={2.4} color="#f4f4f6" />
          <ControlIcon />
          <StatusClock>Sab 27 lug   18:05</StatusClock>
        </StatusArea>
      </MenuBar>

      <BrowserWindow>
        <TabStrip>
          <TrafficLights>
            <Light $color="#ee6a5f" />
            <Light $color="#f5bd4f" />
            <Light $color="#61c454" />
          </TrafficLights>
          {tabs.map((t, i) => (
            <Tab key={t.title} $divider={i > 0}>
              <Favicon>{t.icon}</Favicon>
              <TabTitle>{t.title}</TabTitle>
              <TabClose><X size={24} strokeWidth={2.4} /></TabClose>
            </Tab>
          ))}
          <Tab $active>
            <ActiveShape />
            <BrevoFavicon>B</BrevoFavicon>
            <TabTitle>Segmenti - Brevo</TabTitle>
            <TabClose><X size={24} strokeWidth={2.4} /></TabClose>
          </Tab>
          <NewTab><Plus size={30} strokeWidth={2.2} /></NewTab>
          <TabSearch><ChevronDown size={28} strokeWidth={3} /></TabSearch>
        </TabStrip>

        <Toolbar>
          <ToolButton><ArrowLeft size={32} strokeWidth={2.4} /></ToolButton>
          <ToolButton $muted><ArrowRight size={32} strokeWidth={2.4} /></ToolButton>
          <ToolButton><RotateCw size={28} strokeWidth={2.6} /></ToolButton>
          <UrlBar>
            <SiteInfo><TuneIcon /></SiteInfo>
            <UrlText>app.brevo.com/contact/segment</UrlText>
            <StarBox><Star size={32} strokeWidth={2.4} /></StarBox>
          </UrlBar>
          <ToolButton $w={72}><ExtensionIcon /></ToolButton>
          <ToolDivider />
          <Avatar>J</Avatar>
          <ToolButton $w={104}><EllipsisVertical size={34} strokeWidth={3} /></ToolButton>
        </Toolbar>

        <Body>
          <Sidebar>
            <LogoRow>Brevo</LogoRow>
            <NavList>
              <NavItem><NavIcon><House size={40} strokeWidth={2.4} /></NavIcon>Home</NavItem>
              <NavItem><NavIcon><CircleUserRound size={40} strokeWidth={2.4} /></NavIcon>Contatti</NavItem>
              <NavItem $sub>Liste</NavItem>
              <ActiveWrap>
                <ActivePill>Segmenti</ActivePill>
                <ActiveMark />
              </ActiveWrap>
              <NavItem $sub>Aziende</NavItem>
              <NavItem $sub>
                Landing page
                <CrownBadge><Crown size={28} strokeWidth={3} color="#111" /></CrownBadge>
              </NavItem>
              <NavItem $sub>Moduli</NavItem>
              <NavItem $sub>Impostazioni</NavItem>
              <NavItem><NavIcon><Send size={38} strokeWidth={2.4} /></NavIcon>Campagne</NavItem>
              <NavItem><NavIcon><AutomationIcon /></NavIcon>Automazioni</NavItem>
              <NavItem><NavIcon><Repeat size={38} strokeWidth={2.4} /></NavIcon>Transazionale</NavItem>
              <NavItem><NavIcon><ChatIcon /></NavIcon>Conversations</NavItem>
              <NavItem><NavIcon><BoardIcon /></NavIcon>Trattative</NavItem>
              <NavItem><NavIcon><CalIcon /></NavIcon>Meetings</NavItem>
            </NavList>
          </Sidebar>

          <Main>
            <TopBar>
              <TopItem><Activity size={34} strokeWidth={2.8} />Consumi e piano</TopItem>
              <TopItem $gap={72}><CircleHelp size={34} strokeWidth={2.8} /></TopItem>
              <TopItem $gap={62}>
                <BellWrap><BellIcon /><BellDot /></BellWrap>
              </TopItem>
              <TopItem $gap={72}><BuildingIcon /></TopItem>
              <TopItem $gap={62}>jeps</TopItem>
              <TopItem $gap={66}><ChevronDown size={30} strokeWidth={3.2} /></TopItem>
            </TopBar>

            <TitleRow>
              <Title>Segmenti</Title>
              <CreateButton><CirclePlus size={34} strokeWidth={2.4} />Crea un segmento</CreateButton>
            </TitleRow>

            <Description>
              È qui che organizzi i tuoi segmenti. Crea, modifica e gestisci i segmenti per interazioni mirate e conservali in cartelle per facilitare la navigazione.
            </Description>

            <LinkRow>
              <TextLink>Comprensione dei filtri e della segmentazione</TextLink>
              <LinkIcon><SquareArrowOutUpRight size={30} strokeWidth={2.8} /></LinkIcon>
              <TextLink>Differenze tra liste e segmenti</TextLink>
              <LinkIcon><SquareArrowOutUpRight size={30} strokeWidth={2.8} /></LinkIcon>
            </LinkRow>

            <FilterRow>
              <SelectBox $w={707} $h={78}>
                Tutte le cartelle (3 segmenti)
                <ChevronDown size={28} strokeWidth={3} color="#1d2738" />
              </SelectBox>
              <SearchBox>
                <Search size={34} strokeWidth={3} color="#1f1f1f" />
                Cerca un nome o un ID di segmento
              </SearchBox>
            </FilterRow>

            <Table>
              <Row $head>
                <HeadStrong>Segmento</HeadStrong>
                <span>ID</span>
                <span>Cartella</span>
                <SortHead>Ultima modifica <ArrowUp size={30} strokeWidth={2.6} /></SortHead>
                <span>Azioni</span>
              </Row>
              {rows.map((r, i) => (
                <Row key={r.id} $last={i === rows.length - 1}>
                  <TextLink>{r.name}</TextLink>
                  <span>{r.id}</span>
                  <span>My segments</span>
                  <span>{r.date}</span>
                  <DotsCell><EllipsisVertical size={32} strokeWidth={3.4} /></DotsCell>
                </Row>
              ))}
              <Footer>
                Righe per pagina
                <RowsSelect $w={144} $h={80}>
                  20
                  <ChevronDown size={28} strokeWidth={3} color="#1d2738" />
                </RowsSelect>
                <RangeText><PageBold>1-3</PageBold> of 3</RangeText>
                <ArrowLeft size={30} strokeWidth={2.6} color="#b3b1f0" />
                <PagerNumber>1</PagerNumber>
                <ArrowRight size={30} strokeWidth={2.6} color="#b3b1f0" />
              </Footer>
            </Table>
          </Main>
        </Body>
      </BrowserWindow>

      <DockZone>
        <Dock>
          <DockEntry running><FinderIcon /></DockEntry>
          <DockEntry><LaunchpadIcon /></DockEntry>
          <DockEntry running><SafariIcon /></DockEntry>
          <DockEntry running><ChromeIcon /></DockEntry>
          <DockEntry badge="16"><MessagesIcon /></DockEntry>
          <DockEntry running badge="5.032" wide><MailIcon /></DockEntry>
          <DockEntry><MapsIcon /></DockEntry>
          <DockEntry><PhotosIcon /></DockEntry>
          <DockEntry><FaceTimeIcon /></DockEntry>
          <DockEntry><CalendarAppIcon /></DockEntry>
          <DockEntry><ContactsIcon /></DockEntry>
          <DockEntry badge="13"><RemindersIcon /></DockEntry>
          <DockEntry running><NotesIcon /></DockEntry>
          <DockEntry><FreeformIcon /></DockEntry>
          <DockEntry><Tile $bg="#141a18"><TvText><FaApple />tv</TvText></Tile></DockEntry>
          <DockEntry><MusicIcon /></DockEntry>
          <DockEntry><KeynoteIcon /></DockEntry>
          <DockEntry><NumbersIcon /></DockEntry>
          <DockEntry><PagesIcon /></DockEntry>
          <DockEntry><Tile $bg="linear-gradient(#46a5ee, #2b66d8)" $size={42}><FaAppStore /></Tile></DockEntry>
          <DockEntry><QuestionMark>?</QuestionMark></DockEntry>
          <DockEntry><SettingsIcon /></DockEntry>
          <DockDivider />
          <DockEntry running><PreviewIcon /></DockEntry>
          <DockEntry running><TerminalIcon /></DockEntry>
          <DockEntry running><Tile $bg="#6a72f0"><FaDiscord /></Tile></DockEntry>
          <DockEntry running><Tile $bg="#6b3aa0" $size={44}><FaGithub /></Tile></DockEntry>
          <DockEntry running badge="1"><Tile $bg="linear-gradient(#7fe27a, #49c44f)" $size={44}><FaWhatsapp /></Tile></DockEntry>
          <DockEntry running><Tile $bg="transparent" $color="#5dcf63" $size={58}><FaSpotify /></Tile></DockEntry>
          <DockDivider />
          {thumbs.map((t) => (
            <ThumbApp key={t.bar}>
              <ThumbWindow $top={t.top} $h={t.h} $bar={t.bar}>
                <ThumbLine $w={100} />
                <ThumbLine $w={80} />
                <ThumbLine $w={92} />
                <ThumbLine $w={60} />
              </ThumbWindow>
              <ThumbBadge $bg={t.bg}>{t.icon}</ThumbBadge>
            </ThumbApp>
          ))}
          <DockEntry><TrashIcon /></DockEntry>
        </Dock>
      </DockZone>
    </Screen>
  );
}
